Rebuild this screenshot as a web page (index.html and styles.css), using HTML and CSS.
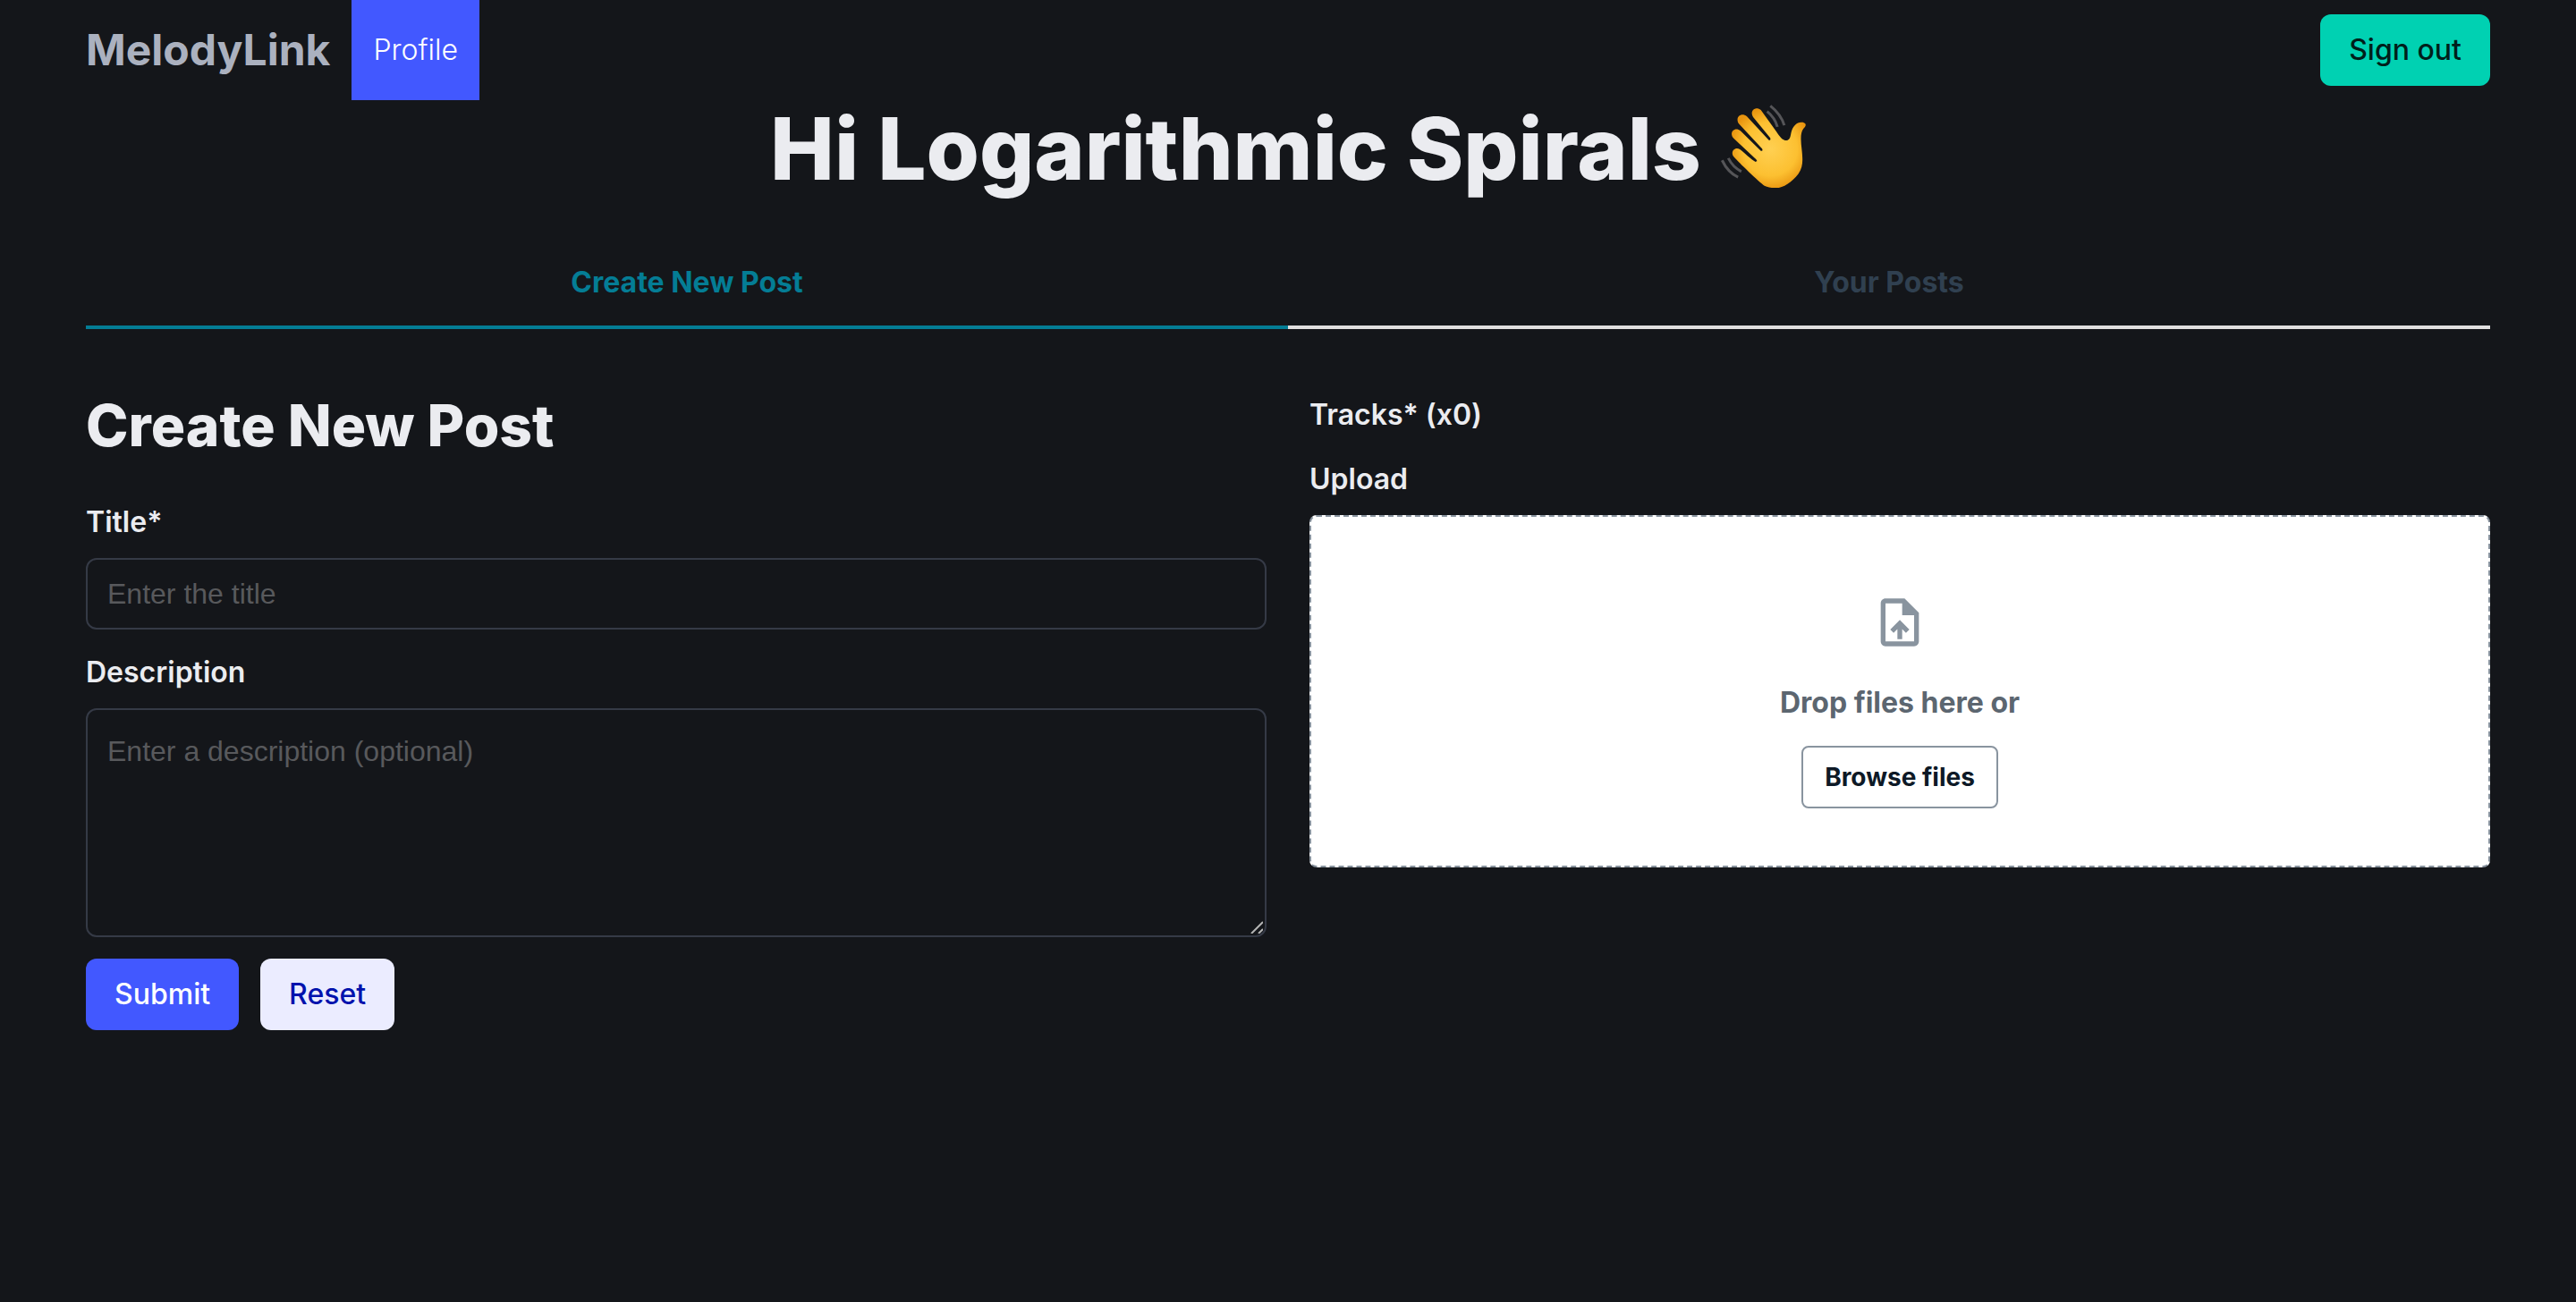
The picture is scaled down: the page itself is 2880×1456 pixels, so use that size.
FILE: index.html
```html
<!DOCTYPE html>
<html lang="en">
<head>
    <meta charset="UTF-8">
    <meta name="viewport" content="width=device-width, initial-scale=1.0">
    <title>MelodyLink</title>
    <link rel="stylesheet" href="styles.css">
</head>
<body>
    <nav class="navbar">
        <a class="brand" href="#">MelodyLink</a>
        <a class="navbar-item" href="#">Profile</a>
        <button class="button is-primary sign-out" type="button">Sign out</button>
    </nav>

    <main>
        <h1 class="title">
            Hi Logarithmic Spirals
            <svg class="wave" viewBox="0 0 290 290" role="img" aria-label="waving hand">
                <defs>
                    <radialGradient id="skin" gradientUnits="userSpaceOnUse" cx="170" cy="150" r="140">
                        <stop offset="0" stop-color="#ffd052"/>
                        <stop offset="0.65" stop-color="#fcc031"/>
                        <stop offset="1" stop-color="#e8940f"/>
                    </radialGradient>
                </defs>
                <path fill="url(#skin)" d="M150 274 C132 262 62 194 47 177 C33 161 49 141 67 151 C79 160 106 186 120 193 C126 193 126 190 122 185 L47 115 C28 96 48 73 69 88 L138 156 C143 158 145 154 142 149 L64 65 C49 44 71 24 91 40 L165 120 C170 121 172 117 169 112 L112 42 C98 20 121 4 138 18 L191 92 C202 108 210 121 225 121 C236 120 238 107 240 96 C245 70 263 56 280 60 C294 65 290 73 282 81 C270 96 273 124 276 150 C280 188 281 211 265 233 C241 264 210 284 184 281 C171 281 160 278 150 274 Z"/>
                <g fill="none" stroke="#555558" stroke-width="9">
                    <path d="M170 4 C195 24 210 45 217 70"/>
                    <path d="M159 23 C178 38 188 54 194 75"/>
                    <path d="M28 181 C38 201 51 215 72 226"/>
                    <path d="M7 188 C21 217 37 234 61 245"/>
                </g>
            </svg>
        </h1>

        <div class="tabs" role="tablist">
            <button class="tab is-active" type="button" role="tab" aria-selected="true">Create New Post</button>
            <button class="tab" type="button" role="tab" aria-selected="false">Your Posts</button>
        </div>

        <form class="columns">
            <div class="column">
                <h2 class="subtitle">Create New Post</h2>
                <div class="field">
                    <label class="label" for="title">Title*</label>
                    <input class="input" id="title" type="text" placeholder="Enter the title">
                </div>
                <div class="field">
                    <label class="label" for="description">Description</label>
                    <div class="control">
                        <textarea class="input textarea" id="description" placeholder="Enter a description (optional)"></textarea>
                        <svg class="grip" viewBox="0 0 16 16" stroke="#b4b4b4" stroke-width="2" aria-hidden="true">
                            <path d="M3 16 L16 3 M11 16 L16 11"/>
                        </svg>
                    </div>
                </div>
                <div class="buttons">
                    <button class="button is-link" type="submit">Submit</button>
                    <button class="button is-light" type="reset">Reset</button>
                </div>
            </div>

            <div class="column">
                <p class="label tracks">Tracks* (x0)</p>
                <p class="label">Upload</p>
                <div class="dropzone">
                    <svg class="upload-icon" viewBox="0 0 24 24" fill="currentColor" aria-hidden="true">
                        <path fill-rule="evenodd" d="M6 2 H14 L20 8 V20 C20 21.1 19.1 22 18 22 H6 C4.9 22 4 21.1 4 20 V4 C4 2.9 4.9 2 6 2 Z M6 4 V20 H18 V9 H13 V4 Z"/>
                        <path d="M8 15.01 L9.41 16.42 L11 14.84 V19 H13 V14.84 L14.59 16.43 L16 15.01 L12.01 11 Z"/>
                    </svg>
                    <p class="drop-text">Drop files here or</p>
                    <button class="browse" type="button">Browse files</button>
                </div>
            </div>
        </form>
    </main>
</body>
</html>
```
FILE: styles.css
```css
* {
    box-sizing: border-box;
    margin: 0;
    padding: 0;
}

body {
    background-color: #14161a;
    color: #ebecf0;
    font-family: Inter, "Noto Sans", sans-serif;
    font-size: 32px;
    line-height: 48px;
    padding: 0 96px;
}

button {
    cursor: pointer;
    font: inherit;
}

a {
    text-decoration: none;
}

.navbar {
    display: flex;
    align-items: center;
    height: 112px;
}

.brand {
    color: #abb1bf;
    font-size: 48px;
    font-weight: 700;
    margin-right: 24px;
}

.navbar-item {
    background-color: #4258ff;
    color: white;
    font-weight: 300;
    line-height: 112px;
    padding: 0 24px;
}

.button {
    border: none;
    border-radius: 12px;
    font-weight: 500;
    height: 80px;
    padding: 0 32px;
}

.is-primary {
    background-color: #00d1b2;
    color: #001f1b;
}

.is-link {
    background-color: #4258ff;
    color: white;
}

.is-light {
    background-color: #ebecff;
    color: #0012ad;
}

.sign-out {
    margin-left: auto;
}

.title {
    font-size: 96px;
    font-weight: 800;
    line-height: 108px;
    margin-bottom: 48px;
    text-align: center;
}

.wave {
    width: 96px;
    height: 96px;
    vertical-align: -12px;
}

.tabs {
    display: flex;
}

.tab {
    flex: 1;
    background: none;
    border: none;
    border-bottom: 4px solid #e0dfdf;
    color: #304050;
    font-weight: 700;
    padding: 24px;
}

.tab.is-active {
    border-color: #047d95;
    color: #047d95;
}

.columns {
    display: grid;
    grid-template-columns: 1fr 1fr;
    gap: 48px;
    padding-top: 72px;
}

.subtitle {
    font-size: 64px;
    font-weight: 800;
    line-height: 72px;
    margin-bottom: 48px;
}

.field {
    margin-bottom: 24px;
}

.label {
    display: block;
    font-weight: 600;
    margin-bottom: 16px;
}

.tracks {
    margin-bottom: 24px;
}

.control {
    position: relative;
}

.input {
    display: block;
    width: 100%;
    height: 80px;
    background: none;
    border: 2px solid #353a46;
    border-radius: 12px;
    color: #ebecf0;
    font-family: "Liberation Sans", Arial, sans-serif;
    font-size: 32px;
    line-height: 48px;
    padding: 0 22px;
}

.input::placeholder {
    color: #58595c;
}

.textarea {
    height: 256px;
    padding: 22px;
    resize: vertical;
}

.textarea::-webkit-resizer {
    display: none;
}

.grip {
    position: absolute;
    right: 4px;
    bottom: 4px;
    width: 16px;
    height: 16px;
    pointer-events: none;
}

.buttons {
    display: flex;
    gap: 24px;
}

.dropzone {
    display: flex;
    flex-direction: column;
    align-items: center;
    background-color: white;
    border: 2px dashed #89949f;
    border-radius: 8px;
    padding: 86px 64px 64px;
}

.upload-icon {
    color: #89949f;
    width: 64px;
    height: 64px;
}

.drop-text {
    color: #5c6670;
    font-weight: 700;
    margin: 34px 0 24px;
}

.browse {
    background: none;
    border: 2px solid #89949f;
    border-radius: 8px;
    color: #0d1926;
    font-size: 28px;
    font-weight: 700;
    line-height: 42px;
    padding: 12px 24px;
}
```
